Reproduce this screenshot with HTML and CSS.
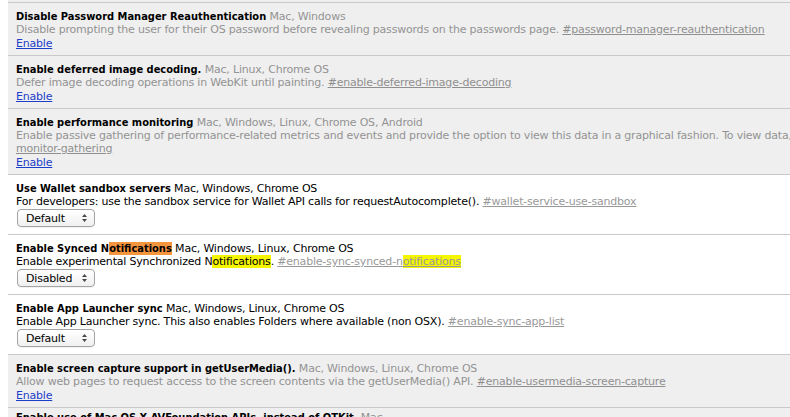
FILE: index.html
```html
<!DOCTYPE html>
<html>
<head>
<meta charset="utf-8">
<title>Experiments</title>
<link rel="stylesheet" href="styles.css">
</head>
<body>
<div class="experiments">
  <div class="experiment disabled prev"></div>

  <div class="experiment disabled">
    <div class="head"><span class="name">Disable Password Manager Reauthentication</span> <span class="platforms">Mac, Windows</span></div>
    <div class="text">Disable prompting the user for their OS password before revealing passwords on the passwords page. <a class="permalink" href="#password-manager-reauthentication">#password-manager-reauthentication</a></div>
    <div class="actions"><a class="enable" href="#">Enable</a></div>
  </div>

  <div class="experiment disabled">
    <div class="head"><span class="name">Enable deferred image decoding.</span> <span class="platforms">Mac, Linux, Chrome OS</span></div>
    <div class="text">Defer image decoding operations in WebKit until painting. <a class="permalink" href="#enable-deferred-image-decoding">#enable-deferred-image-decoding</a></div>
    <div class="actions"><a class="enable" href="#">Enable</a></div>
  </div>

  <div class="experiment disabled">
    <div class="head"><span class="name">Enable performance monitoring</span> <span class="platforms">Mac, Windows, Linux, Chrome OS, Android</span></div>
    <div class="text nowrap">Enable passive gathering of performance-related metrics and events and provide the option to view this data in a graphical fashion. To view data, visit chrome://performance. <a class="permalink" href="#performance-monitor-gathering">#performance-<br>monitor-gathering</a></div>
    <div class="actions"><a class="enable" href="#">Enable</a></div>
  </div>

  <div class="experiment">
    <div class="head"><span class="name">Use Wallet sandbox servers</span> <span class="platforms">Mac, Windows, Chrome OS</span></div>
    <div class="text">For developers: use the sandbox service for Wallet API calls for requestAutocomplete(). <a class="permalink" href="#wallet-service-use-sandbox">#wallet-service-use-sandbox</a></div>
    <div class="actions">
      <span class="popup">
        <select><option>Default</option><option>Enabled</option><option>Disabled</option></select>
        <svg class="arrows" width="5" height="8" viewBox="0 0 5 8"><path d="M2.5 0 L5 3 L0 3 Z M0 5 L5 5 L2.5 8 Z" fill="#4a4a4a"/></svg>
      </span>
    </div>
  </div>

  <div class="experiment">
    <div class="head"><span class="name">Enable Synced N<mark class="active">otifications</mark></span> <span class="platforms">Mac, Windows, Linux, Chrome OS</span></div>
    <div class="text">Enable experimental Synchronized N<mark>otifications</mark>. <a class="permalink" href="#enable-sync-synced-notifications">#enable-sync-synced-n<mark>otifications</mark></a></div>
    <div class="actions">
      <span class="popup">
        <select><option>Disabled</option><option>Default</option><option>Enabled</option></select>
        <svg class="arrows" width="5" height="8" viewBox="0 0 5 8"><path d="M2.5 0 L5 3 L0 3 Z M0 5 L5 5 L2.5 8 Z" fill="#4a4a4a"/></svg>
      </span>
    </div>
  </div>

  <div class="experiment">
    <div class="head"><span class="name">Enable App Launcher sync</span> <span class="platforms">Mac, Windows, Linux, Chrome OS</span></div>
    <div class="text">Enable App Launcher sync. This also enables Folders where available (non OSX). <a class="permalink" href="#enable-sync-app-list">#enable-sync-app-list</a></div>
    <div class="actions">
      <span class="popup">
        <select><option>Default</option><option>Enabled</option><option>Disabled</option></select>
        <svg class="arrows" width="5" height="8" viewBox="0 0 5 8"><path d="M2.5 0 L5 3 L0 3 Z M0 5 L5 5 L2.5 8 Z" fill="#4a4a4a"/></svg>
      </span>
    </div>
  </div>

  <div class="experiment disabled">
    <div class="head"><span class="name">Enable screen capture support in getUserMedia().</span> <span class="platforms">Mac, Windows, Linux, Chrome OS</span></div>
    <div class="text">Allow web pages to request access to the screen contents via the getUserMedia() API. <a class="permalink" href="#enable-usermedia-screen-capture">#enable-usermedia-screen-capture</a></div>
    <div class="actions"><a class="enable" href="#">Enable</a></div>
  </div>

  <div class="experiment disabled tail">
    <div class="head"><span class="name">Enable use of Mac OS X AVFoundation APIs, instead of QTKit.</span> <span class="platforms">Mac</span></div>
    <div class="text">Enable use of Mac OS X AVFoundation APIs for video capturing, instead of QTKit. <a class="permalink" href="#enable-avfoundation">#enable-avfoundation</a></div>
    <div class="actions"><a class="enable" href="#">Enable</a></div>
  </div>
</div>
</body>
</html>
```
FILE: styles.css
```css
html {
  overflow: hidden;
  background: #fff;
}
body {
  margin: 0 0 0 8px;
  font-family: "DejaVu Sans", Verdana, sans-serif;
  font-size: 11px;
  letter-spacing: -0.2px;
  line-height: 13px;
  color: #000;
}
.experiments {
  display: flex;
  flex-direction: column;
}
.experiment {
  border-bottom: 1px solid #c9c9c9;
  padding: 7px 0 6px 8px;
}
.experiment.disabled {
  padding-bottom: 5px;
}
.experiment.tail {
  padding-top: 3px;
}
.experiment.prev {
  height: 2px;
  padding: 0;
}
.disabled {
  background: #efefef;
  color: #939393;
}
.name {
  font-family: "DejaVu Sans Condensed", "DejaVu Sans", sans-serif;
  font-stretch: condensed;
  font-weight: bold;
  letter-spacing: 0;
  color: #000;
}
.permalink {
  color: #999;
  text-decoration: underline;
}
.disabled .permalink {
  color: #8f8f8f;
}
.nowrap {
  white-space: nowrap;
}
.actions {
  margin-top: 1px;
}
.enable {
  color: #1d3ec9;
  text-decoration: underline;
}
mark {
  background: #f5f500;
  color: inherit;
}
mark.active {
  background: #f5953e;
}
.popup {
  position: relative;
  display: inline-block;
  margin: 0 0 1px 1px;
  vertical-align: top;
}
.popup select {
  appearance: none;
  -webkit-appearance: none;
  display: block;
  width: 78px;
  height: 18px;
  margin: 0;
  padding: 0 0 0 8px;
  border: 1px solid #a3a3a3;
  border-radius: 4px;
  background: linear-gradient(#ffffff, #f0f0f0);
  font-family: "DejaVu Sans", Verdana, sans-serif;
  font-size: 11px;
  letter-spacing: -0.2px;
  color: #000;
  box-shadow: 0 1px 0 rgba(0,0,0,0.05);
}
.popup .arrows {
  position: absolute;
  right: 8px;
  top: 5px;
  pointer-events: none;
}
```
